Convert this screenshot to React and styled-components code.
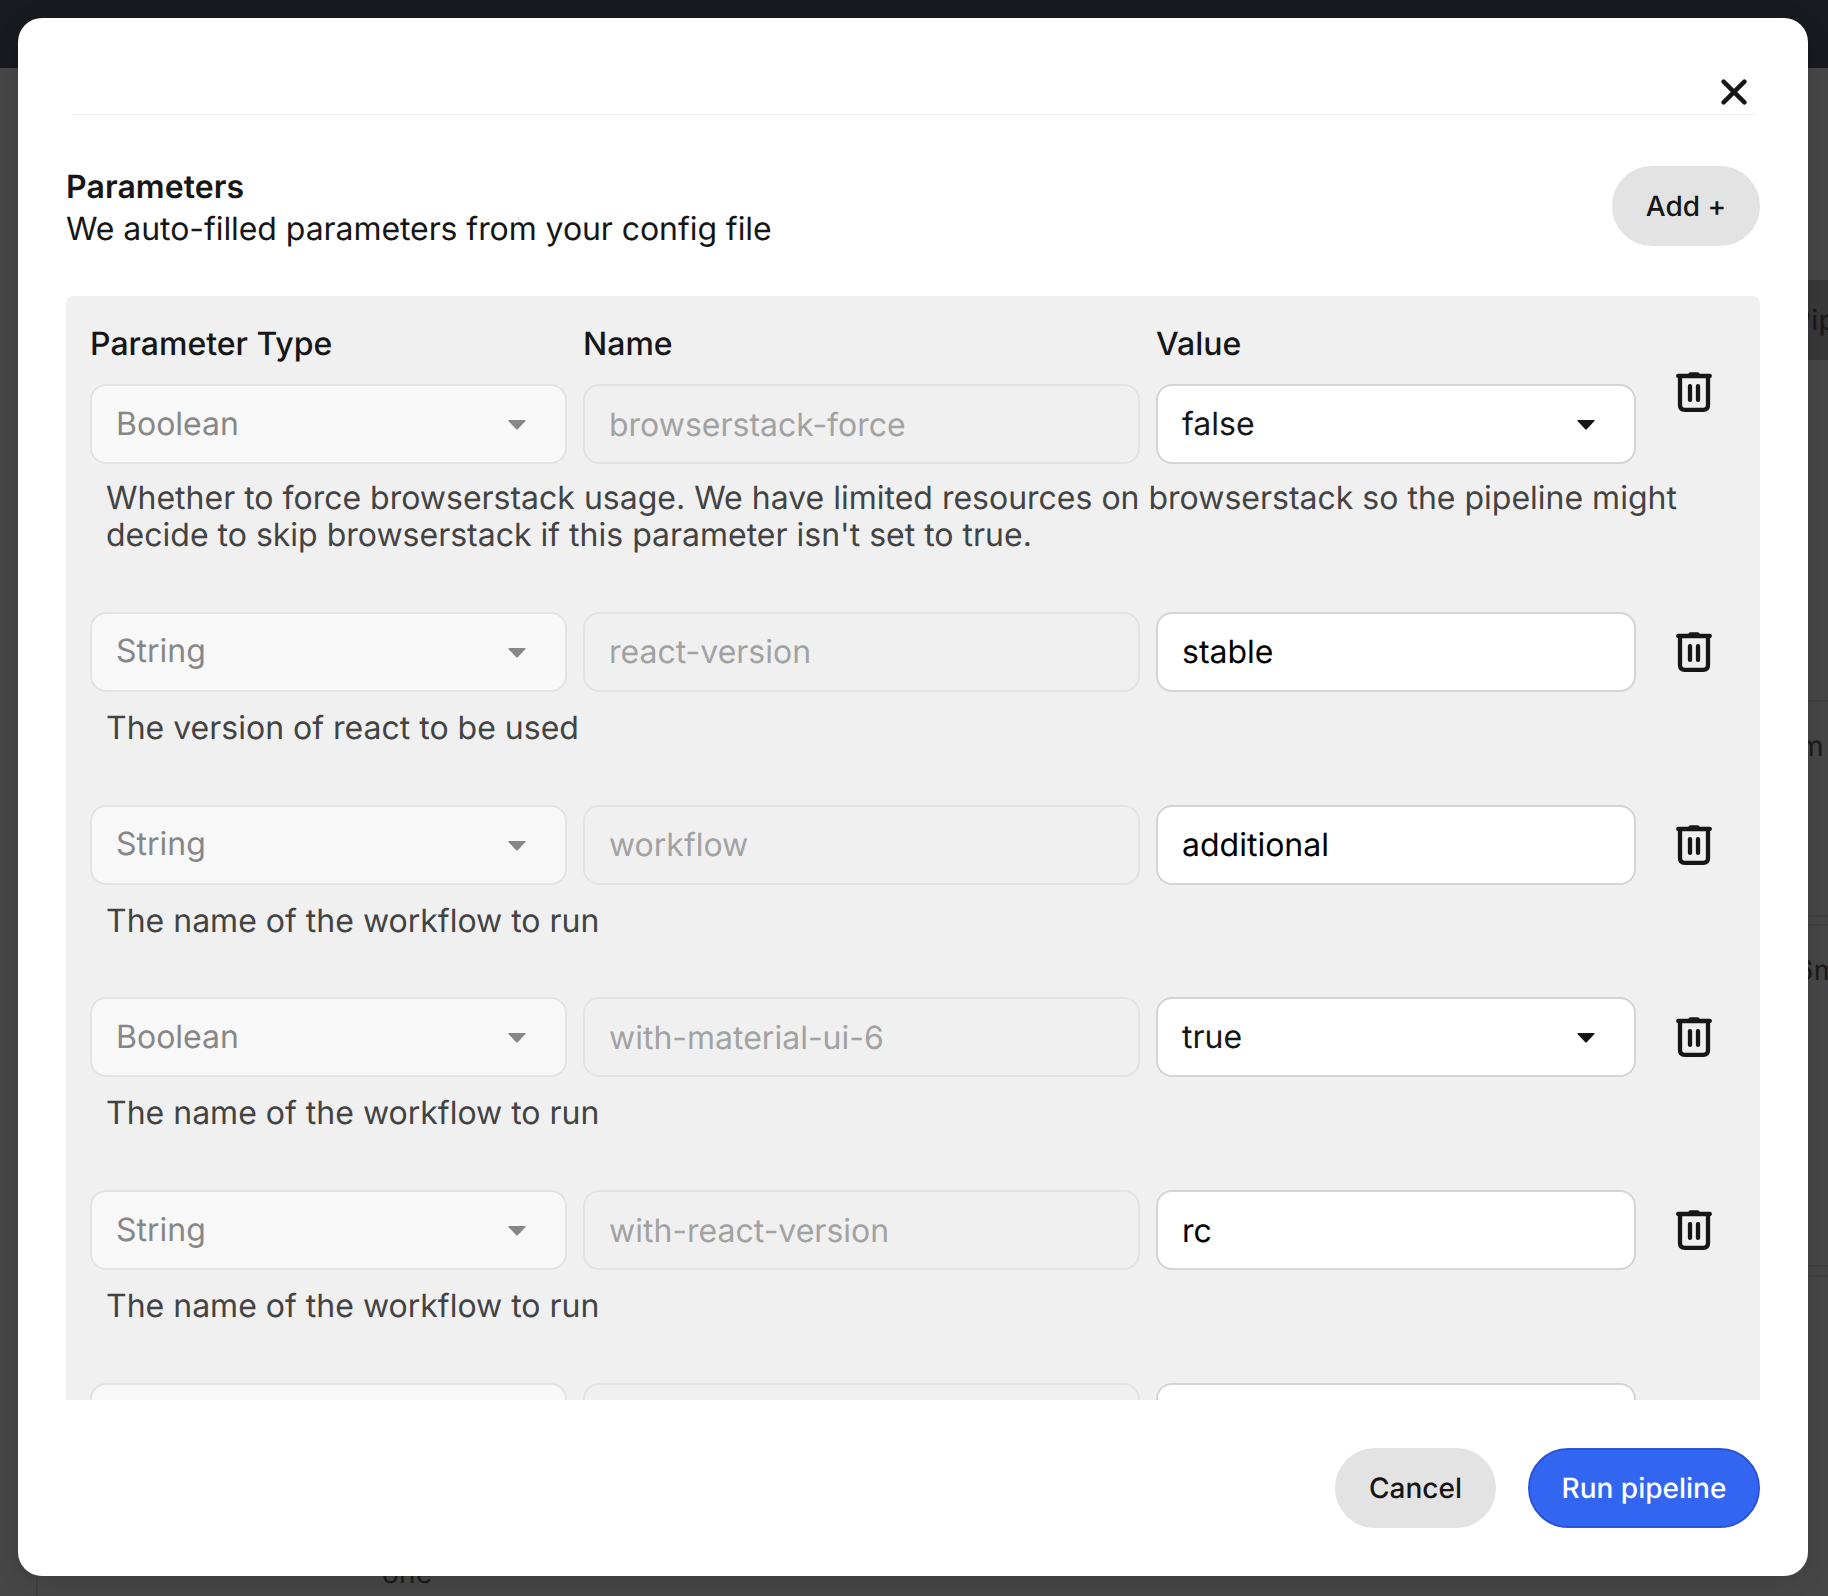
import React from "react";
import styled, { createGlobalStyle } from "styled-components";

const Global = createGlobalStyle`
  * { box-sizing: border-box; }
  body { margin: 0; overflow: hidden; font-family: Inter, "Liberation Sans", sans-serif; font-size: 32px; color: #161616; -webkit-font-smoothing: antialiased; text-rendering: geometricPrecision; }
`;

const Page = styled.div`
  position: relative;
  width: 1828px;
  height: 1596px;
  overflow: hidden;
  background: #464646;
`;

const TopBar = styled.div`
  height: 68px;
  background: #191a1f;
`;

const Behind = styled.div`
  position: absolute;
  left: ${(p) => p.$x}px;
  top: ${(p) => p.$y}px;
  font-size: 28px;
  font-weight: ${(p) => p.$weight || 400};
  line-height: 40px;
  letter-spacing: 0.3px;
  color: #1b1b1b;
  white-space: nowrap;
`;

const FilterPill = styled.div`
  position: absolute;
  left: 1700px;
  top: 280px;
  width: 200px;
  height: 80px;
  background: #383838;
`;

const Card = styled.div`
  position: absolute;
  left: 36px;
  top: ${(p) => p.$top}px;
  width: 1900px;
  height: ${(p) => p.$height}px;
  border: 2px solid #3f3f3f;
`;

const Modal = styled.section`
  position: absolute;
  left: 18px;
  top: 18px;
  width: 1790px;
  height: 1558px;
  padding: 0 48px;
  display: flex;
  flex-direction: column;
  border-radius: 24px;
  background: #fff;
  box-shadow: 0 4px 24px rgba(0, 0, 0, 0.12);
`;

const ModalHeader = styled.header`
  height: 97px;
  margin: 0 5px;
  padding: 0 8px 9px 0;
  display: flex;
  justify-content: flex-end;
  align-items: flex-end;
  border-bottom: 1px solid #f0f0f0;
`;

const IconButton = styled.button`
  padding: 0;
  border: 0;
  background: none;
  display: flex;
  color: #161616;
`;

const TitleRow = styled.div`
  height: 181px;
  padding-top: 51px;
  display: flex;
  justify-content: space-between;
  align-items: flex-start;
`;

const Heading = styled.h2`
  margin: 0;
  font-size: 32px;
  line-height: 42px;
  font-weight: 600;
  letter-spacing: 0.08px;
`;

const Subheading = styled.p`
  margin: 0;
  line-height: 42px;
  letter-spacing: -0.07px;
`;

const PillButton = styled.button`
  height: 80px;
  width: ${(p) => p.$width}px;
  padding: 0;
  border: 2px solid ${(p) => (p.$primary ? "#2a52dc" : "#e3e3e3")};
  border-radius: 40px;
  background: ${(p) => (p.$primary ? "#3366f0" : "#e3e3e3")};
  color: ${(p) => (p.$primary ? "#fff" : "#161616")};
  font-family: inherit;
  font-size: 28px;
  font-weight: 500;
  text-rendering: inherit;
`;

const Panel = styled.div`
  height: 1104px;
  flex: none;
  overflow: hidden;
  padding: 30px 24px 0;
  border-radius: 8px 8px 0 0;
  background: #f0f0f0;
`;

const columns = "477px 557px 480px 1fr";

const Labels = styled.div`
  height: 58px;
  display: grid;
  grid-template-columns: ${columns};
  column-gap: 16px;
  font-weight: 500;
  line-height: 36px;
`;

const Row = styled.div`
  height: ${(p) => p.$height}px;
`;

const Fields = styled.div`
  height: 80px;
  display: grid;
  grid-template-columns: ${columns};
  column-gap: 16px;
`;

const Field = styled.div`
  display: flex;
  align-items: center;
  justify-content: space-between;
  padding: 0 39px ${(p) => (p.$select ? 2 : 0)}px 24px;
  border: 2px solid ${(p) => (p.$disabled ? "#e3e3e3" : "#d4d4d4")};
  border-radius: 16px;
  background: ${(p) => p.$bg || "#fff"};
  color: ${(p) => p.$color || "#161616"};

  svg {
    margin-top: 4px;
  }
`;

const Remove = styled(IconButton)`
  width: 36px;
  height: 40px;
  margin: ${(p) => (p.$first ? -12 : 20)}px 0 0 24px;
`;

const Description = styled.p`
  margin: ${(p) => (p.$multi ? 15 : 17)}px 0 0 16px;
  line-height: 37px;
  color: #434343;
  white-space: pre-line;
`;

const Footer = styled.footer`
  padding-top: 48px;
  display: flex;
  justify-content: flex-end;
  gap: 32px;
`;

const CloseIcon = () => (
  <svg width="26" height="26" viewBox="0 0 26 26" fill="none" stroke="currentColor" strokeWidth="4.4" strokeLinecap="round">
    <path d="M2.6 2.6l20.8 20.8M23.4 2.6l-20.8 20.8" />
  </svg>
);

const TrashIcon = () => (
  <svg width="36" height="40" viewBox="0 0 36 40" fill="none" stroke="currentColor" strokeWidth="4.3" strokeLinecap="round" strokeLinejoin="round">
    <path d="M2.2 4h31.6M14.5 2.3h7M4 4v29q0 4.8 4.8 4.8h18.4q4.8 0 4.8-4.8V4M14 14.1v13.8M22 14.1v13.8" />
  </svg>
);

const Caret = () => (
  <svg width="18" height="10" viewBox="0 0 18 10" fill="currentColor">
    <path d="M1.2 0h15.6q1.6 0 .5 1.2l-7.3 7.7q-1 1-2 0L.7 1.2Q-.4 0 1.2 0z" />
  </svg>
);

const rows = [
  {
    type: "Boolean",
    name: "browserstack-force",
    value: "false",
    text: "Whether to force browserstack usage. We have limited resources on browserstack so the pipeline might\ndecide to skip browserstack if this parameter isn't set to true.",
  },
  { type: "String", name: "react-version", value: "stable", text: "The version of react to be used" },
  { type: "String", name: "workflow", value: "additional", text: "The name of the workflow to run" },
  { type: "Boolean", name: "with-material-ui-6", value: "true", text: "The name of the workflow to run" },
  { type: "String", name: "with-react-version", value: "rc", text: "The name of the workflow to run" },
  { type: "", name: "", value: "", text: "" },
];

export default function App() {
  return (
    <Page>
      <Global />
      <TopBar />
      <FilterPill />
      <Behind $x={1793} $y={300} $weight={500}>Pip</Behind>
      <Card $top={700} $height={217} />
      <Card $top={924} $height={343} />
      <Card $top={1275} $height={400} />
      <Behind $x={1799} $y={726}>m</Behind>
      <Behind $x={1796} $y={950}>6m</Behind>
      <Behind $x={382} $y={1553}>one</Behind>
      <Modal>
        <ModalHeader>
          <IconButton aria-label="Close"><CloseIcon /></IconButton>
        </ModalHeader>
        <TitleRow>
          <div>
            <Heading>Parameters</Heading>
            <Subheading>We auto-filled parameters from your config file</Subheading>
          </div>
          <PillButton $width={148}>Add +</PillButton>
        </TitleRow>
        <Panel>
          <Labels>
            <span>Parameter Type</span>
            <span>Name</span>
            <span>Value</span>
          </Labels>
          {rows.map((r, i) => {
            const choice = r.type === "Boolean";
            return (
              <Row key={i} $height={i === 0 ? 227.75 : 192.75}>
                <Fields>
                  <Field $disabled $select $bg="#f8f8f8" $color="#878787">
                    {r.type}
                    <Caret />
                  </Field>
                  <Field $disabled $bg="#f0f0f0" $color="#a2a2a2">{r.name}</Field>
                  <Field $select={choice} $color={choice ? "#161616" : "#000"}>
                    {r.value}
                    {choice && <Caret />}
                  </Field>
                  <Remove $first={i === 0} aria-label="Remove parameter"><TrashIcon /></Remove>
                </Fields>
                <Description $multi={i === 0}>{r.text}</Description>
              </Row>
            );
          })}
        </Panel>
        <Footer>
          <PillButton $width={161}>Cancel</PillButton>
          <PillButton $primary $width={232}>Run pipeline</PillButton>
        </Footer>
      </Modal>
    </Page>
  );
}
